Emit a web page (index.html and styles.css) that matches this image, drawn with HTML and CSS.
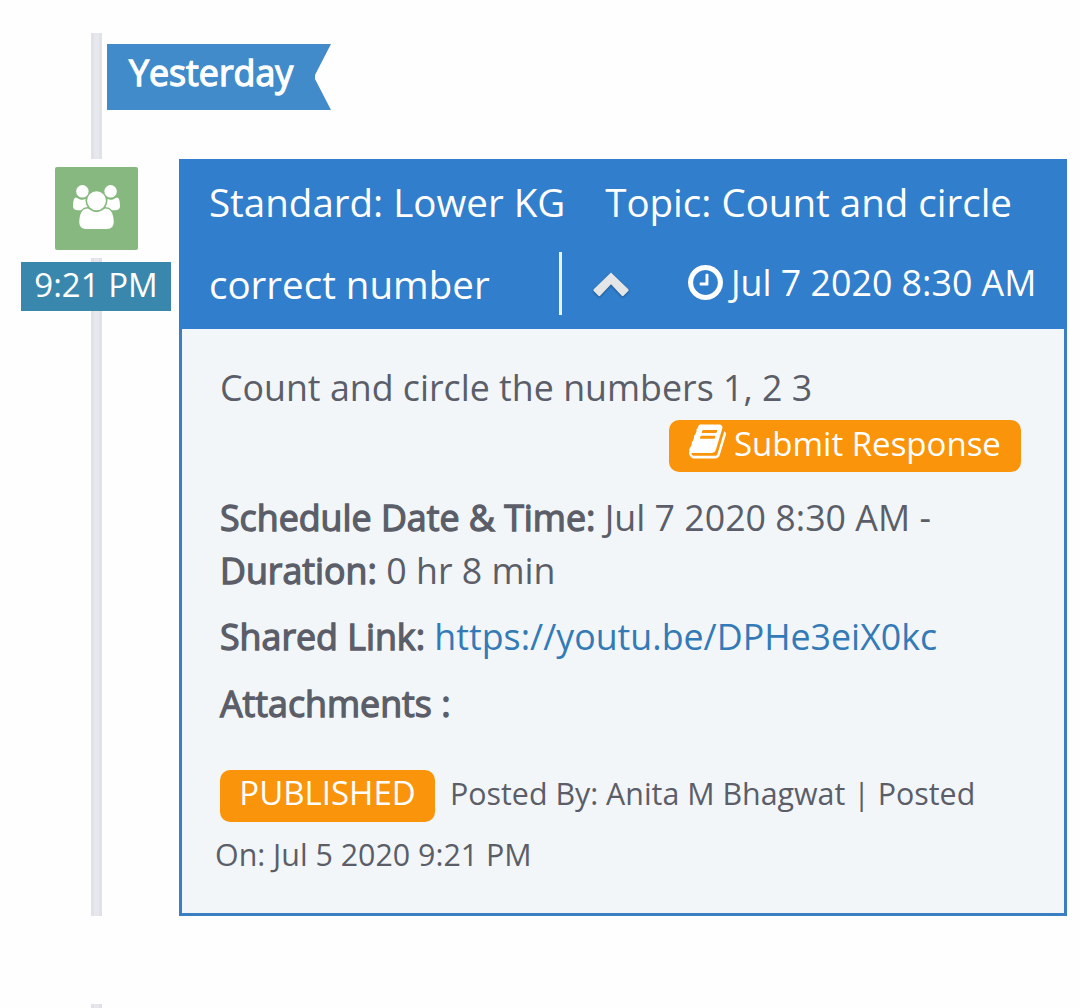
FILE: index.html
```html
<!DOCTYPE html>
<html lang="en">
<head>
  <meta charset="UTF-8">
  <meta name="viewport" content="width=device-width, initial-scale=1.0">
  <title>Timeline</title>
  <link rel="stylesheet" href="styles.css">
</head>
<body>
  <div class="timeline">
    <div class="day">
      <div class="ribbon"><span class="strong">Yesterday</span></div>
    </div>

    <div class="entry">
      <div class="rail">
        <div class="rail-icon">
          <svg width="47" height="44" viewBox="0 0 1920 1792" fill="#fff"><path d="M593 896q-162 5-265 128H194q-82 0-138-40.500T0 865q0-353 124-353 6 0 43.500 21t97.500 42.500T384 597q67 0 133-23-5 37-5 66 0 139 81 256zm1071 637q0 120-73 189.500t-194 69.500H523q-121 0-194-69.500T256 1533q0-53 3.500-103.500t14-109T300 1212t43-97.500 62-81 85.500-53.500T602 960q10 0 43 21.500t73 48 107 48 135 21.500 135-21.500 107-48 73-48 43-21.500q61 0 111.500 20t85.500 53.500 62 81 43 97.500 26.500 108.500 14 109 3.500 103.500zM640 256q0 106-75 181t-181 75-181-75-75-181 75-181T384 0t181 75 75 181zm704 384q0 159-112.500 271.500T960 1024 688.500 911.500 576 640t112.500-271.500T960 256t271.500 112.500T1344 640zm576 225q0 78-56 118.500t-138 40.500h-134q-103-123-265-128 81-117 81-256 0-29-5-66 66 23 133 23 59 0 119-21.500t97.500-42.500 43.500-21q124 0 124 353zm-128-609q0 106-75 181t-181 75-181-75-75-181 75-181 181-75 181 75 75 181z"/></svg>
        </div>
        <div class="rail-time">9:21 PM</div>
      </div>

      <div class="card">
        <div class="card-head">
          <div class="head-row">
            <span>Standard: Lower KG</span>
            <span class="topic">Topic: Count and circle</span>
          </div>
          <div class="head-row">
            <span class="topic-rest">correct number</span>
            <span class="divider"></span>
            <svg class="chevron" width="36" height="25" viewBox="0 0 36 25"><path d="M18 0.500 35.300 17.200Q36 18.200 35.300 19L30.600 23.800Q29.700 24.500 28.800 23.800L18 12.300 7.200 23.800Q6.300 24.500 5.400 23.800L0.700 19Q0 18.200 0.700 17.200Z" fill="#e3e5e7"/></svg>
            <span class="head-date">
              <svg width="35" height="35" viewBox="128 128 1536 1536" fill="#fff"><path d="M1024 544v448q0 14-9 23t-23 9H672q-14 0-23-9t-9-23v-64q0-14 9-23t23-9h224V544q0-14 9-23t23-9h64q14 0 23 9t9 23zm416 352q0-148-73-273t-198-198-273-73-273 73-198 198-73 273 73 273 198 198 273 73 273-73 198-198 73-273zm224 0q0 209-103 385.500T1281.500 1561 896 1664t-385.500-103T231 1281.500 128 896t103-385.500T510.500 231 896 128t385.500 103T1561 510.500 1664 896z"/></svg>
              <span>Jul 7 2020 8:30 AM</span>
            </span>
          </div>
        </div>

        <div class="card-body">
          <p>Count and circle the numbers 1, 2 3</p>
          <div class="actions">
            <a class="pill submit">
              <svg width="37" height="35" viewBox="64 128 1664 1536" fill="#fff"><path d="M1703 478q40 57 18 129l-275 906q-19 64-76.500 107.500T1247 1664H324q-77 0-148.500-53.500T76 1479q-24-67-2-127 0-4 3-27t4-37q1-8-3-21.500t-3-19.500q2-11 8-21t16.500-23.500T116 1179q23-38 45-91.500t30-91.500q3-10 .5-30t-.5-28q3-11 17-28t17-23q21-36 42-92t25-90q1-9-2.500-32t.5-28q4-13 22-30.500t22-22.500q19-26 42.500-84.500T404 411q1-8-3-25.500t-2-26.500q2-8 9-18t18-23 17-21q8-12 16.500-30.500t15-35 16-36 19.500-32T533.500 140t36-11.500T617 134l-1 3q38-9 51-9h761q74 0 114 56t18 130l-274 906q-36 119-71.500 153.500T1086 1408H217q-27 0-38 15-11 16-1 43 24 70 144 70h923q29 0 56-15.500t35-41.500l300-987q7-22 5-57 38 15 59 43zm-1064 2q-4 13 2 22.500t20 9.500h608q13 0 25.500-9.500T1311 480l21-64q4-13-2-22.500t-20-9.500H702q-13 0-25.500 9.500T660 416zm-83 256q-4 13 2 22.500t20 9.500h608q13 0 25.500-9.500T1228 736l21-64q4-13-2-22.500t-20-9.500H619q-13 0-25.500 9.500T577 672z"/></svg>
              <span>Submit Response</span>
            </a>
          </div>
          <p><span class="strong">Schedule Date &amp; Time:</span> Jul 7 2020 8:30 AM -<br><span class="strong">Duration:</span> 0 hr 8 min</p>
          <p><span class="strong">Shared Link:</span> <a class="link">https://youtu.be/DPHe3eiX0kc</a></p>
          <p><span class="strong">Attachments :</span></p>
          <div class="card-foot"><span class="pill status">PUBLISHED</span>Posted By: Anita M Bhagwat | Posted<br>On: Jul 5 2020 9:21 PM</div>
        </div>
      </div>
    </div>

    <div class="next-day"></div>
  </div>
</body>
</html>
```
FILE: styles.css
```css
:root {
  --head-bg: #317ecc;
  --card-border: #3a7fc1;
  --card-bg: #f2f6f9;
  --text: #5b5e68;
  --orange: #fa940a;
  /* 11px vertical rail, centred under the icon */
  --rail: linear-gradient(90deg, #e0e2e6 3px, #e6e8ed 3px, #e6e8ed 8px, #e0e2e6 8px) 91px 0 / 11px 100% no-repeat;
}
* {
  box-sizing: border-box;
}
body {
  margin: 0;
  background: #fefefe;
  font-family: "Open Sans", "Noto Sans", sans-serif;
  color: var(--text);
  overflow: hidden;
}
svg {
  display: block;
  flex: none;
}
.timeline {
  height: 1008px;
  padding-top: 33px;
}
.strong {
  -webkit-text-stroke: 1.3px currentColor;
}

/* day marker */
.day {
  height: 126px;
  padding: 11px 0 0 107px;
  background: var(--rail);
}
.ribbon {
  width: 224px;
  height: 66px;
  padding-left: 22px;
  background: #428bca;
  clip-path: polygon(0 0, 100% 0, 208px 31px, 208px 35px, 100% 100%, 0 100%);
  color: #fff;
  font-size: 35.75px;
  line-height: 56px;
}

/* entry */
.entry {
  display: grid;
  grid-template-columns: 179px 888px;
  height: 757px;
}
.rail {
  background: var(--rail);
}
.rail-icon {
  display: flex;
  align-items: center;
  justify-content: center;
  width: 99px;
  height: 99px;
  margin-left: 47px;
  padding: 0 1px 3px 0;
  border: 8px solid #fefefe;
  border-radius: 10px;
  background: #87b87f;
}
.rail-time {
  width: 150px;
  height: 49px;
  margin: 4px 0 0 21px;
  background: #3a87ad;
  color: #fff;
  font-size: 33px;
  line-height: 46px;
  text-align: center;
  white-space: nowrap;
}
.card {
  border: 3px solid var(--card-border);
  border-top: 0;
  background: var(--card-bg);
}
.card-head {
  height: 170px;
  margin: 0 -3px;
  padding: 2px 0 0 30px;
  background: var(--head-bg);
  color: #fff;
  font-size: 38.5px;
}
.head-row {
  display: flex;
  align-items: center;
  height: 82px;
  line-height: 81px;
  white-space: nowrap;
}
.topic {
  margin-left: 40px;
}
.topic-rest {
  width: 350px;
}
.divider {
  width: 3px;
  height: 63px;
  margin-bottom: 2px;
  background: #e9f2fa;
}
.chevron {
  margin: 0 0 0 31px;
  filter: drop-shadow(0 1px 1px rgba(0, 0, 0, 0.35));
}
.head-date {
  display: flex;
  align-items: center;
  gap: 8px;
  margin: 0 0 4px 59px;
  font-size: 35.75px;
  line-height: 78px;
}
.head-date svg {
  margin-top: 1px;
}

/* content */
.card-body {
  padding: 32px 0 0 38px;
  font-size: 35.75px;
  line-height: 53px;
}
p {
  margin: 0 0 13.25px;
  white-space: nowrap;
}
.card-body p:first-child {
  margin-bottom: 6px;
}
.link {
  color: #337ab7;
}
.actions {
  display: flex;
  justify-content: flex-end;
  margin: 0 43px 19px 0;
}
.pill {
  height: 52px;
  border-radius: 10px;
  background: var(--orange);
  color: #fff;
  font-size: 33px;
}
.submit {
  display: flex;
  gap: 8px;
  width: 352px;
  padding-left: 20px;
  line-height: 48px;
}
.submit svg {
  margin-top: 4px;
}
.card-foot {
  margin: 33px 0 0 -5px;
  font-size: 30.38px;
  line-height: 61px;
  white-space: nowrap;
}
.status {
  display: inline-block;
  width: 215px;
  margin: 0 15px 0 5px;
  line-height: 46px;
  text-align: center;
}

/* top of the following day's rail */
.next-day {
  height: 4px;
  margin-top: 88px;
  background: var(--rail);
}
```
